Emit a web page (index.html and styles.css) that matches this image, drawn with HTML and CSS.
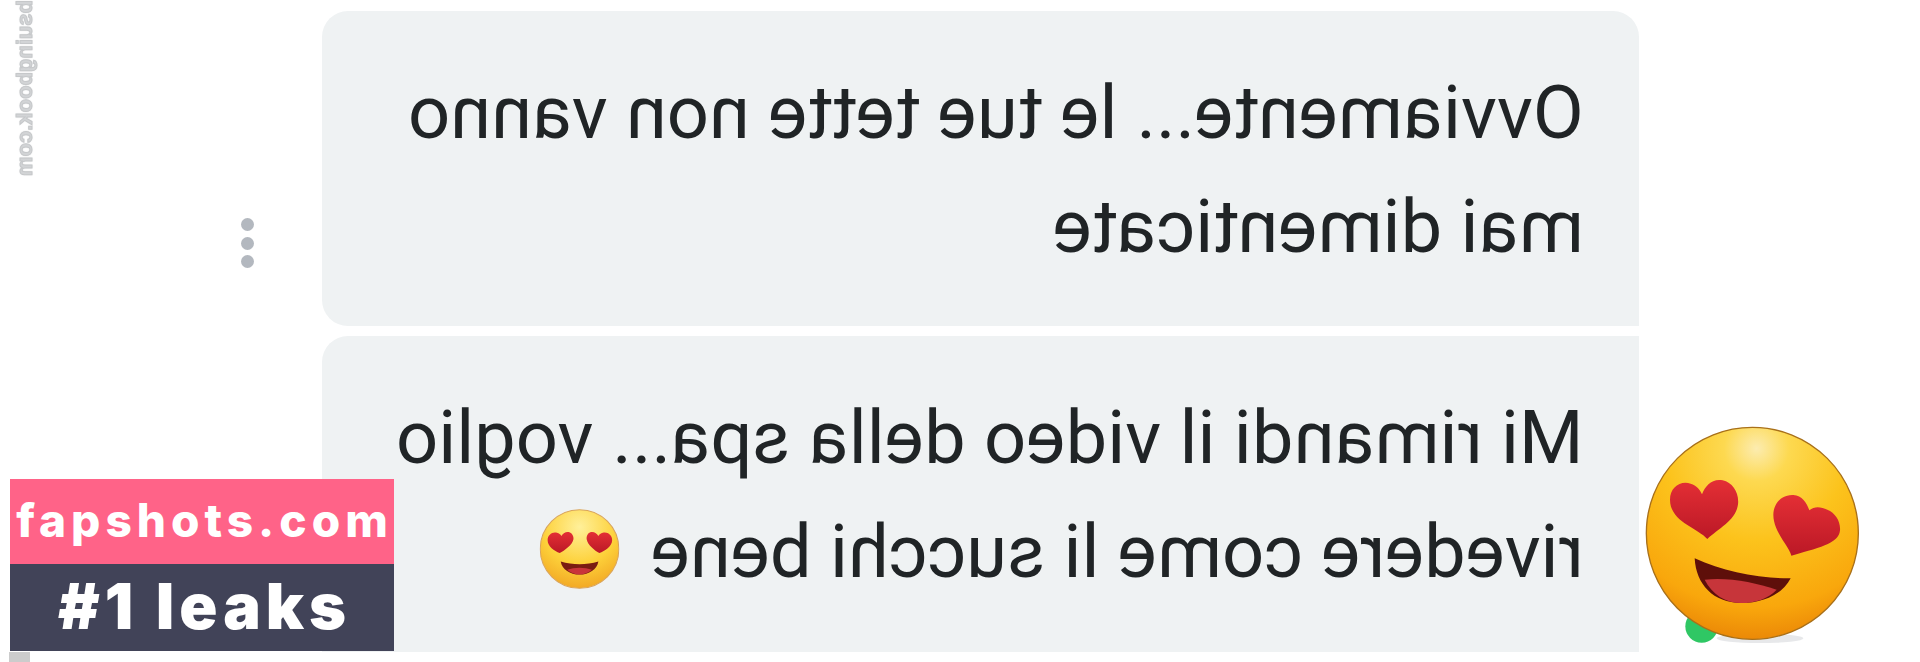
FILE: index.html
```html
<!DOCTYPE html>
<html lang="it">
<head>
<meta charset="utf-8">
<title>Chat</title>
<link rel="stylesheet" href="styles.css">
</head>
<body>
<svg class="defs" width="0" height="0" aria-hidden="true">
  <defs>
    <radialGradient id="faceBig" cx="52%" cy="10%" r="96%">
      <stop offset="0" stop-color="#fcecb0"/>
      <stop offset=".16" stop-color="#fdd950"/>
      <stop offset=".45" stop-color="#fcc31c"/>
      <stop offset=".78" stop-color="#f9a70c"/>
      <stop offset="1" stop-color="#e67d05"/>
    </radialGradient>
    <radialGradient id="faceSmall" cx="50%" cy="22%" r="85%">
      <stop offset="0" stop-color="#fff09a"/>
      <stop offset=".55" stop-color="#fdd13a"/>
      <stop offset="1" stop-color="#f0a020"/>
    </radialGradient>
    <linearGradient id="heart" x1="0" y1="0" x2="0" y2="1">
      <stop offset="0" stop-color="#e42f35"/>
      <stop offset="1" stop-color="#bb1826"/>
    </linearGradient>
  </defs>
</svg>

<main class="thread">
  <section class="bubble bubble-first">
    <p class="text">Ovviamente... le tue tette non vanno<br>mai dimenticate</p>
  </section>
  <section class="bubble bubble-second">
    <p class="text">Mi rimandi il video della spa... voglio<br>rivedere come li succhi bene <svg class="emoji-small" viewBox="90 57 238 238" aria-hidden="true">
      <circle cx="209" cy="176" r="117" fill="url(#faceSmall)" stroke="#d9a45a" stroke-width="3"/>
      <path d="M150 188c-16-6-38-20-38-38 0-16 14-26 28-22 6 2 10 5 13 9 4-8 14-14 24-11 8 3 12 12 11 20-3 18-24 34-38 42z" fill="url(#heart)"/>
      <path d="M268 188c16-6 36-20 36-38 0-16-14-26-28-22-6 2-10 5-13 9-4-8-14-14-24-11-8 3-13 12-12 20 3 18 27 34 41 42z" fill="url(#heart)"/>
      <path d="M153 213c36 11 76 11 112 0-4 24-28 39-56 39s-52-15-56-39z" fill="#7a1c12"/>
      <path d="M172 238c22-8 52-8 74 0-10 9-24 14-37 14s-27-5-37-14z" fill="#c9343a"/>
    </svg></p>
  </section>
</main>

<div class="menu-dots"><span class="dot"></span><span class="dot"></span><span class="dot"></span></div>
<div class="watermark">bsuingbook.com</div>
<div class="scrap"></div>

<aside class="badge">
  <div class="badge-site">fapshots.com</div>
  <div class="badge-tag">#1 leaks</div>
</aside>

<svg class="emoji-big" viewBox="120 70 680 680" aria-hidden="true">
  <ellipse cx="480" cy="716" rx="130" ry="14" fill="#c9ccd0" opacity=".45"/>
  <circle cx="305" cy="680" r="49" fill="#2fc764"/>
  <circle cx="457" cy="401" r="318" fill="url(#faceBig)" stroke="#a8701a" stroke-width="4"/>
  <path d="M322 418c-30-34-112-52-112-118 0-36 30-58 62-48 18 6 28 18 34 32 10-26 30-48 62-42 30 6 50 38 46 72-6 48-58 72-92 104z" fill="url(#heart)"/>
  <path d="M574 468c-6-28-54-72-54-122 0-38 28-62 60-60 26 2 40 22 48 46 16-14 36-10 54-2 24 10 40 34 38 62-4 36-44 48-146 76z" fill="url(#heart)"/>
  <path d="M284 476c86 40 186 60 288 60-24 48-84 74-148 74-84 0-136-56-140-134z" fill="#5e0f0a"/>
  <path d="M314 540c70-8 150 8 216 30-26 28-66 40-106 40-48 0-88-26-110-70z" fill="#c7353a"/>
</svg>
</body>
</html>
```
FILE: styles.css
```css
* { box-sizing: border-box; }
html, body { margin: 0; height: 662px; overflow: hidden; background: #fff; }
body { position: relative; font-family: Roboto, "Liberation Sans", sans-serif; }
.defs { position: absolute; }

.thread {
  display: flex;
  flex-direction: column;
  gap: 10px;
  width: 1317px;
  margin-left: 322px;
  padding-top: 11px;
}
.bubble {
  height: 315px;
  background: #eff2f3;
  padding: 45px 55px 0 0;
  display: flex;
  justify-content: flex-end;
}
.bubble-first { border-radius: 26px 26px 0 26px; }
.bubble-second { height: 316px; border-radius: 26px 0 0 0; padding-top: 45px; }
.text {
  margin: 0;
  font-size: 74px;
  line-height: 114px;
  color: #202426;
  white-space: nowrap;
  transform: scaleX(-1);
  text-align: left;
}
.emoji-small { width: 80px; height: 80px; vertical-align: -12px; margin-left: 13px; filter: blur(.4px); }

.menu-dots {
  position: absolute;
  left: 241px;
  top: 218px;
  display: flex;
  flex-direction: column;
  gap: 5.5px;
}
.dot { width: 13px; height: 13px; border-radius: 50%; background: #b3b8bf; }

.watermark {
  position: absolute;
  left: 12px;
  top: 0;
  writing-mode: vertical-rl;
  transform: scaleX(-1);
  font: 700 22px/25px "Liberation Sans", sans-serif;
  color: #d2d4d6;
  white-space: nowrap;
  -webkit-text-stroke: 1px #c6c8ca;
  text-shadow: 0 0 2px #d6d8da;
}
.scrap { position: absolute; left: 9px; top: 652px; width: 21px; height: 10px; background: #ccc; }

.badge { position: absolute; left: 10px; top: 479px; width: 384px; color: #fff; text-align: center; font-family: Inter, "Noto Sans", sans-serif; }
.badge-site { height: 85px; padding-left: 5px; background: #ff6388; font-size: 46px; font-weight: 800; line-height: 82px; letter-spacing: 5px; white-space: nowrap; }
.badge-tag { height: 87px; padding-left: 5px; background: #414358; font-size: 63px; font-weight: 900; line-height: 84px; letter-spacing: 5px; white-space: nowrap; }

.emoji-big { position: absolute; left: 1640px; top: 423px; width: 226.7px; height: 226.7px; filter: blur(.5px); }
```
